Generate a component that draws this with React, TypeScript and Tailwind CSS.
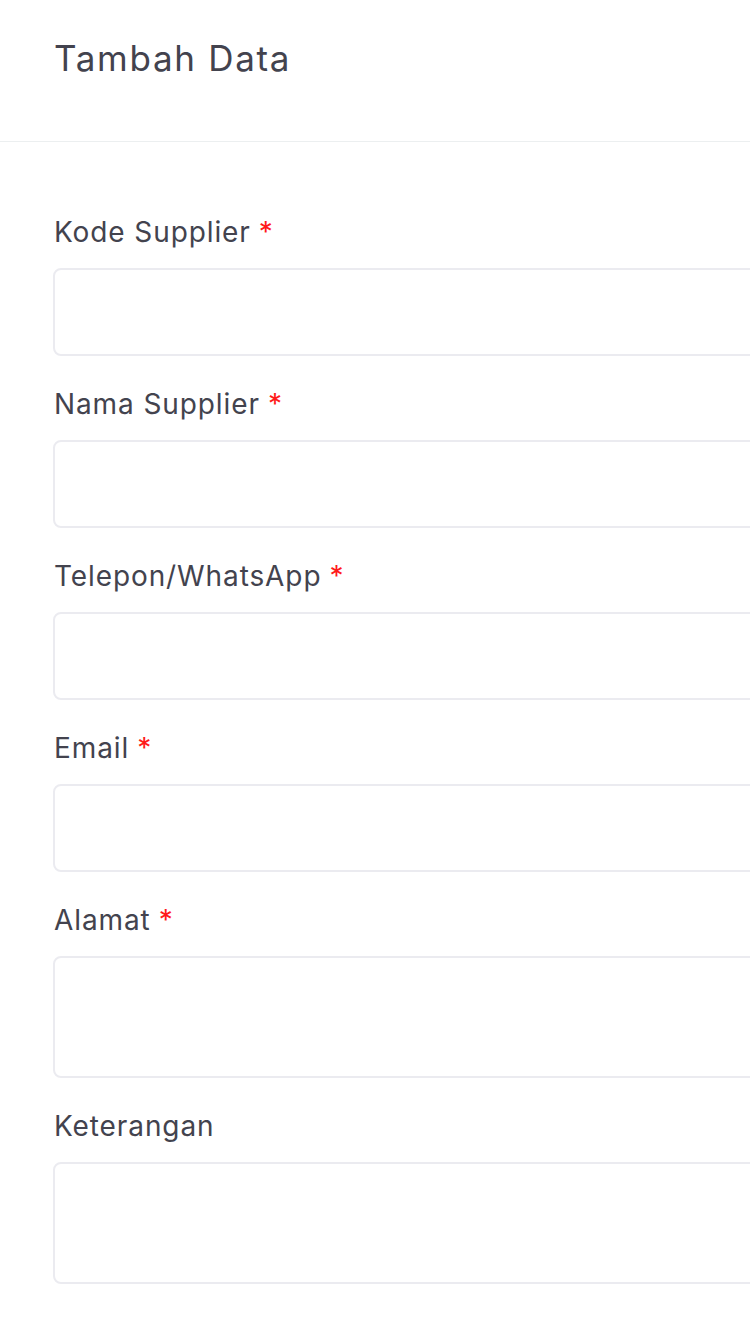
import React from "react";

const fields: { label: string; required: boolean; tall?: boolean }[] = [
  { label: "Kode Supplier", required: true },
  { label: "Nama Supplier", required: true },
  { label: "Telepon/WhatsApp", required: true },
  { label: "Email", required: true },
  { label: "Alamat", required: true, tall: true },
  { label: "Keterangan", required: false, tall: true },
];

export default function App() {
  return (
    <div
      className="w-[750px] min-h-[1334px] bg-white overflow-hidden text-[#43434e]"
      style={{ fontFamily: "Inter, 'Noto Sans', sans-serif" }}
    >
      <div className="h-[142px] border-b border-[#eceff0] pt-[34px] pl-[54px]">
        <h1 className="text-[35px] leading-[48px] font-normal tracking-[1.7px]">Tambah Data</h1>
      </div>
      <form className="pt-[70px] pl-[53px] flex flex-col gap-[28px]">
        {fields.map((f) => (
          <div key={f.label} className="flex flex-col gap-[16px]">
            <label className="text-[28px] leading-[40px] pl-[1px] tracking-[0.9px]">
              {f.label}
              {f.required && <span className="text-[#ff1a1a] ml-[8px]">*</span>}
            </label>
            {f.tall ? (
              <textarea className="block w-[740px] h-[122px] border-2 border-[#ebebf0] rounded-[8px] bg-white resize-none outline-none" />
            ) : (
              <input className="block w-[740px] h-[88px] border-2 border-[#ebebf0] rounded-[8px] bg-white outline-none" />
            )}
          </div>
        ))}
      </form>
    </div>
  );
}
